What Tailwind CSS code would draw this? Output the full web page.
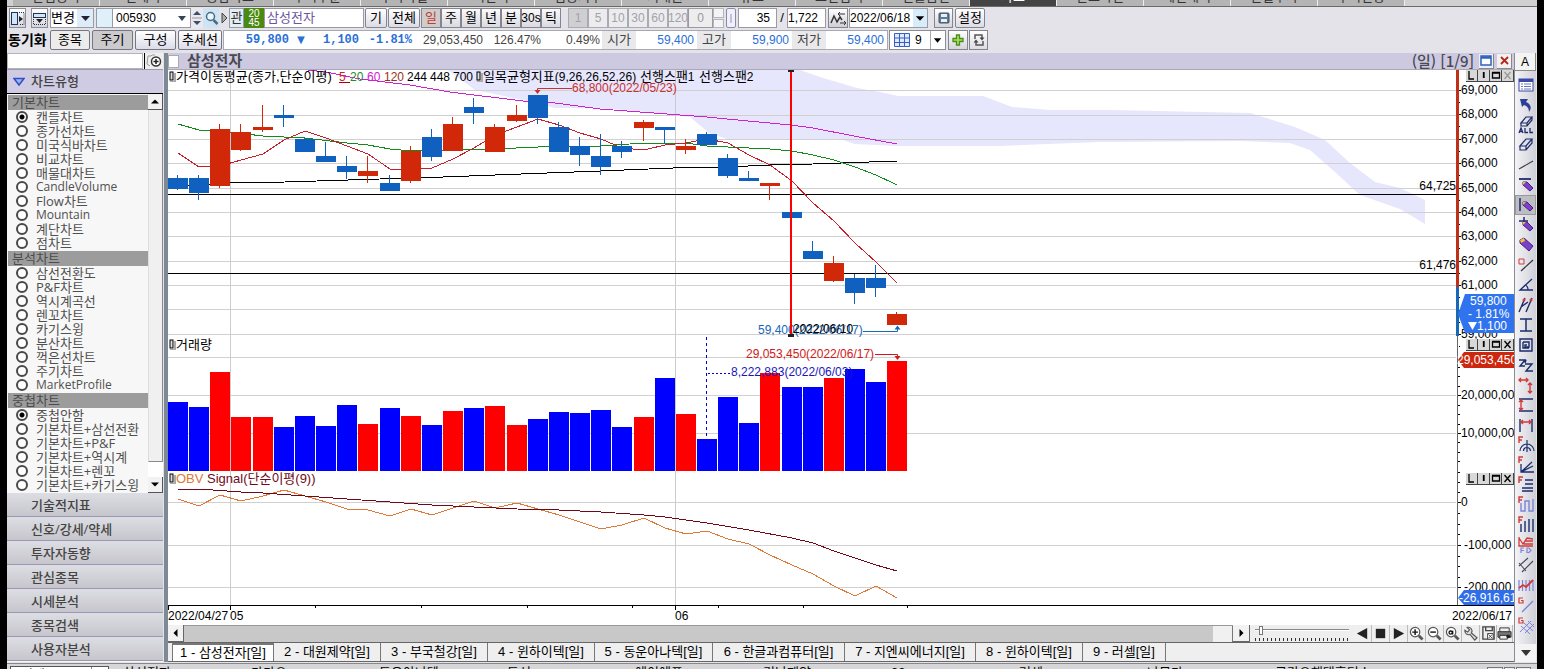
<!DOCTYPE html>
<html lang="ko">
<head>
<meta charset="utf-8">
<title>삼성전자 - 종합차트</title>
<script src="https://cdn.jsdelivr.net/npm/@tailwindcss/browser@4"></script>
</head>
<body class="min-h-screen overflow-x-hidden bg-black font-['Liberation_Sans','Noto_Sans_CJK_KR',sans-serif] text-[13px] leading-4 text-black">
<div class="mr-[7px] ml-[7px] flex h-screen min-h-[669px] flex-col overflow-hidden bg-[#e4e3e9]">

  <!-- screen tabs, scrolled mostly out of view -->
  <nav id="screens" aria-label="화면" class="flex h-[7px] shrink-0 items-end overflow-hidden border-b border-[#6b6a66] bg-[#d0d0d0] pl-[6px]"></nav>

  <!-- toolbar, first row -->
  <div class="mt-px flex h-5 shrink-0 items-stretch whitespace-nowrap pl-[2px]">
    <button aria-label="왼쪽 창" class="flex w-[17px] items-center justify-center border border-[#8c8c94] bg-gradient-to-b from-white to-[#d5d5de]"><svg width="15" height="15" viewBox="0 0 15 15"><rect x="1.500" y="1.500" width="6" height="12" fill="#cfe6fa" stroke="#235"/><path d="M9 1.500h5v12H9" fill="none" stroke="#235" stroke-dasharray="1 1"/><path d="M9 5l4 3-4 3z" fill="#222"/></svg></button>
    <button aria-label="아래 창" class="ml-[5px] flex w-[17px] items-center justify-center border border-[#8c8c94] bg-gradient-to-b from-white to-[#d5d5de]"><svg width="15" height="15" viewBox="0 0 15 15"><rect x="1.500" y="2.500" width="12" height="4" fill="#cfe6fa" stroke="#235"/><path d="M1.500 8v5.500h12V8" fill="none" stroke="#235" stroke-dasharray="1 1"/><path d="M4 8h7l-3.500 4z" fill="#222"/></svg></button>
    <div class="ml-[2px] flex w-[44px] items-center border border-[#9a9aa4] bg-white"><select aria-label="변경" class="w-[26px] appearance-none leading-4"><option>변경</option></select><svg class="h-full flex-1 bg-[#dcecf8]" viewBox="0 0 16 18"><path d="M4 7h9l-4.500 5z" fill="#223"/></svg></div>
    <button aria-label="종목 구분" class="ml-[2px] w-[17px] border border-[#9a9aa4] bg-[#dff0fb]"></button>
    <div class="flex w-[78px] items-center border border-l-0 border-[#9a9aa4] bg-white"><input aria-label="종목코드" value="005930" class="w-[62px] pl-[3px] text-[12px] leading-4"><svg class="h-full w-[14px]" viewBox="0 0 14 18"><path d="M3 7h8l-4 5z" fill="#345"/></svg></div>
    <button aria-label="이전 다음 종목" class="flex w-[12px] items-center justify-center bg-[#e8e8ee]"><svg width="10" height="16" viewBox="0 0 10 16"><path d="M1 5l4-4 4 4zM1 11l4 4 4-4z" fill="#3a5068"/><path d="M0 8h10" stroke="#999"/></svg></button>
    <button aria-label="종목 검색" class="flex w-[16px] items-center justify-center bg-[#cfe4f2]"><svg width="15" height="16" viewBox="0 0 15 16"><circle cx="6.500" cy="6.500" r="4" fill="#e8f6ff" stroke="#4a6a84" stroke-width="1.500"/><path d="M9.500 10l4 4" stroke="#4a6a84" stroke-width="2.500"/></svg></button>
    <button aria-label="펼치기" class="flex w-[10px] items-center justify-center"><svg width="7" height="12" viewBox="0 0 7 12"><path d="M1 1l5 5-5 5z" fill="#aaa" stroke="#444"/></svg></button>
    <button class="w-[15px] overflow-hidden border border-[#9a9aa4] bg-[#e2eef6] text-[#333]">관</button>
    <div class="flex w-[20px] flex-col items-center justify-center bg-[#4a8a12] text-[10px] leading-[9px] text-white"><span>20</span><span>45</span></div>
    <input aria-label="종목명" value="삼성전자" class="w-[100px] border border-[#9a9aa4] bg-white pl-[2px] text-[#6a55a0]">
    <button class="ml-px w-[22px] rounded-xs border border-[#85858f] bg-gradient-to-b from-white to-[#dcdce6]">기</button>
    <button class="ml-px w-[32px] rounded-xs border border-[#85858f] bg-gradient-to-b from-white to-[#dcdce6]">전체</button>
    <div id="periods" class="ml-px flex"></div>
    <div id="minutes" class="ml-[7px] flex"></div>
    <input aria-label="사용자 분" disabled value="0" class="w-[25px] border border-[#9a9aa4] bg-[#ededed] text-center text-[12px] text-[#999]">
    <div class="flex w-[11px] flex-col gap-px"><button aria-label="증가" class="flex-1 border border-[#b5b5bd] bg-[#f4f4f4]"></button><button aria-label="감소" class="flex-1 border border-[#b5b5bd] bg-[#f4f4f4]"></button></div>
    <button aria-label="구분" class="ml-[2px] w-[10px] rounded-xs border border-[#8a8aa8] bg-[#f0f0fa] text-[9px] text-[#77a]">|</button>
    <input aria-label="표시 개수" value="35" class="ml-[2px] w-[39px] border border-[#9a9aa4] bg-white pr-[6px] text-right text-[12px]">
    <span class="w-[10px] text-center leading-5">/</span>
    <input aria-label="전체 개수" value="1,722" class="w-[39px] border border-[#9a9aa4] bg-white text-left text-[12px]">
    <button aria-label="추세 전환" class="ml-[2px] flex w-[20px] items-center justify-center border border-[#85858f] bg-gradient-to-b from-white to-[#cfcfd6]"><svg width="17" height="15" viewBox="0 0 17 15"><path d="M1 12l3-7 3 6 3-5 2 3" fill="none" stroke="#333" stroke-width="1.500"/><path d="M8 3h7M10 1L8 3l2 2M10 12h6M14 10l2 2-2 2" stroke="#333" fill="none"/></svg></button>
    <div class="ml-px flex w-[79px] items-center border border-[#9a9aa4] bg-white"><input aria-label="기준일" value="2022/06/18" class="w-[63px] text-[12px] leading-4"><svg class="h-full flex-1 bg-[#d8edfb]" viewBox="0 0 15 18"><path d="M3 7h9l-4.500 5z"/></svg></div>
    <button aria-label="저장" class="ml-[6px] flex w-[19px] items-center justify-center border border-[#85858f] bg-gradient-to-b from-white to-[#d5d5dc]"><svg width="12" height="12" viewBox="0 0 12 12"><rect x="1" y="1" width="10" height="10" rx="1" fill="#5f7c94" stroke="#3c5366"/><path d="M3 2h6v3H3zM3 7h6v3H3z" fill="#e8f0f6"/></svg></button>
    <button class="ml-[2px] w-[30px] rounded-xs border border-[#85858f] bg-gradient-to-b from-white to-[#dcdce6]">설정</button>
  </div>

  <!-- toolbar, second row -->
  <div class="mt-[2px] flex h-5 shrink-0 items-stretch whitespace-nowrap pl-px">
    <span class="w-[42px] text-[14px] leading-5 font-bold">동기화</span>
    <button class="w-[40px] rounded-xs border border-[#77777f] bg-[#ececec]">종목</button>
    <button class="ml-[2px] w-[41px] rounded-xs border border-[#77777f] bg-[#cbcbcd]">주기</button>
    <button class="ml-[2px] w-[41px] rounded-xs border border-[#77777f] bg-gradient-to-b from-white to-[#dcdcea]">구성</button>
    <button class="ml-[2px] w-[44px] rounded-xs border border-[#77777f] bg-gradient-to-b from-white to-[#dcdcea]">추세선</button>
    <div class="ml-px flex w-[665px] border border-[#a8a8b0] bg-white text-[12px] leading-[18px] text-[#444]">
      <b class="w-[65px] text-right font-['Liberation_Mono',monospace] text-[#2a6fd6]">59,800</b>
      <span class="w-[24px] text-center text-[13px] text-[#2a6fd6]">▼</span>
      <b class="w-[46px] text-right font-['Liberation_Mono',monospace] text-[#2a6fd6]">1,100</b>
      <b class="w-[53px] text-right font-['Liberation_Mono',monospace] text-[#2a6fd6]">-1.81%</b>
      <span class="w-[71px] text-right">29,053,450</span>
      <span class="w-[58px] text-right">126.47%</span>
      <span class="w-[61px] pr-[2px] text-right">0.49%</span>
      <span class="w-[34px] bg-[#e9e9ec] text-center text-[13px]">시가</span><span class="w-[61px] pr-[3px] text-right text-[#2a6fd6]">59,400</span>
      <span class="w-[34px] bg-[#e9e9ec] text-center text-[13px]">고가</span><span class="w-[61px] pr-[3px] text-right text-[#2a6fd6]">59,900</span>
      <span class="w-[34px] bg-[#e9e9ec] text-center text-[13px]">저가</span><span class="w-[61px] pr-[3px] text-right text-[#2a6fd6]">59,400</span>
    </div>
    <div class="ml-px flex w-[57px] items-center border border-[#8c8c94] bg-white"><svg class="ml-[4px]" width="16" height="14" viewBox="0 0 16 14"><path d="M.500.500h15v13H.500zM.500 5h15M.500 9.500h15M5.500.500v13M10.500.500v13" fill="#dfeaff" stroke="#3b5fc0"/></svg><select aria-label="화면 수" class="ml-[5px] w-[15px] appearance-none text-[12px] leading-4"><option>9</option></select><svg class="h-full flex-1 border-l border-[#aaa]" viewBox="0 0 15 18"><path d="M3 7h8l-4 5z"/></svg></div>
    <button aria-label="추가" class="ml-[2px] flex w-[20px] items-center justify-center border border-[#85858f] bg-gradient-to-b from-white to-[#d5d5dc]"><svg width="12" height="12" viewBox="0 0 12 12"><path d="M4.500 1h3v3.500H11v3H7.500V11h-3V7.500H1v-3h3.500z" fill="#a8e060" stroke="#4c8c1c" stroke-width="1.300"/></svg></button>
    <button aria-label="새로고침" class="ml-px flex w-[19px] items-center justify-center border border-[#85858f] bg-gradient-to-b from-white to-[#dcdce2]"><svg width="14" height="14" viewBox="0 0 14 14"><path d="M3 6V2h7v3M11 8v4H4V9" fill="none" stroke="#555" stroke-width="1.500"/><path d="M7.500 4.500h5L10 7.500zM1.500 9.500h5L4 6.500z" fill="#444"/></svg></button>
  </div>

  <div class="mt-[3px] flex shrink-0 items-stretch">
    <!-- chart type panel -->
    <aside class="flex w-[156px] shrink-0 flex-col bg-[#f7f7f7]">
      <div class="flex h-[17px] border-b border-[#9c9ca8]"><input aria-label="차트 검색" class="min-w-0 flex-1 border border-[#b4b4bc] bg-white"><button aria-label="찾기" class="ml-px flex w-[19px] items-center justify-center border-l border-black bg-[#eee]"><svg width="16" height="14" viewBox="0 0 16 14"><path d="M2 2h3l1-1h3M2 2L1 10l3 2" fill="none" stroke="#999"/><circle cx="10" cy="7.500" r="4.500" fill="#fff" stroke="#333" stroke-width="1.500"/><path d="M7.500 7.500h5M10 5v5" stroke="#222" stroke-width="1.500"/></svg></button></div>
      <button class="flex h-[24px] items-center border-b border-black bg-[#cfcbe3] pl-[6px] text-left font-medium text-[#444]"><svg class="mr-[6px]" width="12" height="10" viewBox="0 0 12 10"><path d="M1 1.500h10L6 8z" fill="#9fb4f4" stroke="#2f4fc4" stroke-width="1.500"/></svg>차트유형</button>
      <div class="flex">
        <div id="types" class="flex-1 pb-px pl-px"></div>
        <div class="flex w-[15px] flex-col bg-[#eeeeee]">
          <button aria-label="위로" class="flex h-[16px] items-center justify-center border-r border-b border-[#555] bg-[#f2f2f2]"><svg width="8" height="5"><path d="M0 4.500l4-4 4 4z"/></svg></button>
          <div class="flex-1 border-r border-b border-l border-[#8a8a8a] border-l-[#ddd] bg-[#f0f0f0]"></div>
          <div class="h-[15px] bg-white"></div>
          <button aria-label="아래로" class="flex h-[16px] items-center justify-center border-r border-b border-[#555] bg-[#f2f2f2]"><svg width="8" height="5"><path d="M0 .500l4 4 4-4z"/></svg></button>
        </div>
      </div>
      <div id="sections" class="flex flex-1 flex-col"></div>
    </aside>
    <div class="w-[5px] shrink-0 border-l border-[#dfe4e8] bg-[#7d8a96]"></div>

    <!-- chart window -->
    <main class="flex min-w-0 flex-1 flex-col bg-[#efefef]">
      <header class="flex h-[17px] shrink-0 items-center border-b border-[#aaa8b4] bg-[#cdc9e1] text-[15px] font-bold text-[#4a4a52]">
        <input type="checkbox" aria-label="차트 선택" class="h-[13px] w-[11px] appearance-none border border-[#aaa] bg-white">
        <h1 class="ml-[8px]">삼성전자</h1>
        <span class="mr-[5px] ml-auto font-['Noto_Sans_CJK_KR',sans-serif] text-[15px] font-medium">(일) [1/9]</span>
        <button aria-label="최대화" class="mr-[3px] flex h-[15px] w-[15px] items-center justify-center border-r border-b border-[#888] bg-[#eef]"><svg width="12" height="11" viewBox="0 0 12 11"><rect x="1" y="1" width="10" height="9" fill="#fff" stroke="#2f62b8" stroke-width="1.500"/><path d="M1 2.500h10" stroke="#2f62b8" stroke-width="2.500"/></svg></button>
        <button aria-label="닫기" class="mr-[2px] flex h-[15px] w-[15px] items-center justify-center border-r border-b border-[#888] bg-[#f3f0f0]"><svg width="9" height="9" viewBox="0 0 9 9"><path d="M1 1l7 7M8 1L1 8" stroke="#b3261e" stroke-width="1.800"/></svg></button>
      </header>
      <div class="flex h-[555px] bg-white">
        <div class="relative min-w-0 flex-1">
          <svg id="plot" class="h-full w-full" role="img" aria-label="삼성전자 일봉 차트"></svg>
          <span class="absolute right-[-56px] bottom-0 text-[12px] leading-[18px] whitespace-nowrap">2022/06/17</span>
        </div>
        <div class="relative w-[58px] shrink-0">
          <svg id="axis" class="h-full w-full" role="img" aria-label="가격 축"></svg>
          <div class="panel absolute top-0 right-0 flex"></div>
          <div class="panel absolute top-[269px] right-0 flex"></div>
          <div class="panel absolute top-[403px] right-0 flex"></div>
        </div>
      </div>
      <!-- horizontal scroll and playback -->
      <div class="flex h-[18px] shrink-0 items-stretch border-b border-[#666] bg-[#eee]">
        <button aria-label="왼쪽으로" class="flex w-[16px] items-center justify-center border-r border-b border-[#666] bg-[#f2f2f2]"><svg width="5" height="8"><path d="M4.500 0v8l-4-4z"/></svg></button>
        <div class="flex flex-1 justify-end border-t border-[#999] bg-[#c8c8c8]"><div class="w-[20px] border-r border-[#777] bg-[#f0f0f0]"></div></div>
        <button aria-label="오른쪽으로" class="flex w-[17px] items-center justify-center border-r border-b border-[#666] bg-[#f2f2f2]"><svg width="5" height="8"><path d="M.500 0v8l4-4z"/></svg></button>
        <label class="ml-[5px] flex w-[94px] flex-col"><input type="range" value="4" aria-label="재생 속도" class="mt-[4px] h-[2px] w-full appearance-none border-t border-[#888] bg-white [&::-webkit-slider-thumb]:h-[9px] [&::-webkit-slider-thumb]:w-[4px] [&::-webkit-slider-thumb]:appearance-none [&::-webkit-slider-thumb]:border [&::-webkit-slider-thumb]:border-[#777] [&::-webkit-slider-thumb]:bg-white"><span class="mt-[7px] h-[3px] w-full bg-[repeating-linear-gradient(90deg,#333_0_1px,transparent_1px_4px)]"></span></label>
        <div id="play" class="mr-px ml-[4px] flex"></div>
      </div>
      <nav id="charts" aria-label="차트 탭" class="flex h-[19px] shrink-0 border-b border-[#666] pl-[4px]"></nav>
    </main>

    <!-- drawing tools -->
    <div class="mr-[1px] flex w-[22px] shrink-0 flex-col border-l border-[#8c8c94] bg-gradient-to-r from-[#f4f4f6] to-[#cfcfd8]">
      <button class="h-[18px] border-r border-b border-[#888] bg-[#f4f4f4] text-[12px]">A</button>
      <div id="tools" class="mt-[4px] flex flex-col"></div>
      <button aria-label="도구 더보기" class="mt-auto flex h-[18px] items-center justify-center bg-[#f4f4f4]"><svg width="10" height="6"><path d="M0 0h10L5 6z" fill="#333"/></svg></button>
    </div>
  </div>

  <!-- quick stock strip -->
  <footer class="mt-px flex h-[8px] min-h-0 flex-1 items-start overflow-hidden border-t border-[#888] bg-[#d6d6d8] pl-[3px]">
    <div class="mt-[2px] flex w-[99px] border border-[#555] bg-white leading-4"><span class="flex-1 pl-[10px]">전체종목</span><span class="w-[17px] border-l border-[#888]"></span></div>
    <div id="stocks" class="flex min-w-0 flex-1"></div>
    <div class="mt-[3px] mr-[6px] flex gap-px"><i class="h-4 w-[16px] border border-[#777] bg-[#eee]"></i><i class="h-4 w-[11px] border border-[#777] bg-[#eee]"></i><i class="h-4 w-[15px] border border-[#777] bg-[#eee]"></i></div>
  </footer>
</div>

<script>
const $ = id => document.getElementById(id);

$('screens').innerHTML = ['관심종목','현재가','종합차트','주식주문','투자자별','시간외','업종지수','거래원','뉴스','조건검색','선물옵션','차트','잔고확인','체결내역','일별주가','수익현황']
  .map((t, i) => `<a href="#" class="flex h-4 w-[87px] shrink-0 items-end justify-center border-r border-[#eee] pb-[3px] text-[13px] ${i == 11 ? 'bg-[#444] text-white' : 'bg-[#b4b4b4] text-[#333]'}"><span class="leading-[13px]">${t}</span></a>`).join('');

$('periods').innerHTML = ['일','주','월','년','분','30s','틱']
  .map((t, i) => `<button class="w-[20px] border border-[#85858f] ${i == 5 ? 'text-[12px]' : 'text-[13px]'} ${i ? 'bg-gradient-to-b from-[#fafafa] to-[#dadae2]' : 'bg-[#d0cccc] text-[#c03a34]'}"><span class="-mx-1">${t}</span></button>`).join('');
$('minutes').innerHTML = ['1','5','10','30','60','120']
  .map((t, i) => `<button disabled class="w-[20px] border border-[#aaaab2] text-[12px] text-[#a2a2a8] ${i ? 'bg-[#ececee]' : 'bg-[#cfcfd2]'}"><span class="-mx-1">${t}</span></button>`).join('');

const groups = [
  ['기본차트', ['캔들차트','종가선차트','미국식바차트','비교차트','매물대차트','CandleVolume','Flow차트','Mountain','계단차트','점차트'], 0],
  ['분석차트', ['삼선전환도','P&amp;F차트','역시계곡선','렌꼬차트','카기스윙','분산차트','꺽은선차트','주기차트','MarketProfile'], -1],
  ['중첩차트', ['중첩안함','기본차트+삼선전환','기본차트+P&amp;F','기본차트+역시계','기본차트+렌꼬','기본차트+카기스윙'], 0]];
$('types').innerHTML = groups.map(([h, rows, sel], g) =>
  `<h2 class="mt-px h-[15px] bg-[#9c9c9c] pl-[4px] text-[13px] leading-[15px] text-[#4c4c4c]">${h}</h2>` +
  rows.map((r, i) => `<label class="flex h-[14px] items-center overflow-hidden pl-[8px] font-['Open_Sans','Noto_Sans_CJK_KR',sans-serif] whitespace-nowrap text-[#505050] ${/[a-z]{5}/.test(r) && !r.includes('&') ? 'text-[12px]' : 'text-[13px]'} leading-[14px]"><input type="radio" name="type${g == 2 ? 2 : 1}" ${i == sel ? 'checked' : ''} class="mr-[8px] h-[12px] w-[12px] shrink-0 appearance-none rounded-full border-2 border-[#484848] bg-white checked:bg-[radial-gradient(circle,#000_0_2px,#fff_3px)]">${r}</label>`).join('')).join('');
$('sections').innerHTML = ['기술적지표','신호/강세/약세','투자자동향','관심종목','시세분석','종목검색','사용자분석']
  .map(t => `<button class="h-[24px] border-b border-[#9a98b4] bg-gradient-to-b from-[#dddde4] to-[#c6c6cc] pl-[24px] text-left font-['Open_Sans','Noto_Sans_CJK_KR',sans-serif] font-medium text-[#444]">${t}</button>`).join('');

document.querySelectorAll('.panel').forEach((p, n) => {
  p.innerHTML = [['하단','M3 1v8h5'],['중앙','M5.500 2v6M6 2v6'],['확대','M2.500 3h7v5h-7zM2 2.500h8'],['닫기','M2.500 2l6 7M8.500 2l-6 7']]
    .map(([l, d], i) => `<button aria-label="${l}" class="h-[12px] w-[12px] border-r border-b border-[#444] bg-[#d8d8d8]"><svg width="11" height="11" viewBox="0 0 11 11"><path d="${d}" fill="none" stroke="${n == 0 && i == 3 ? '#999' : '#000'}" stroke-width="1.300"/></svg></button>`).join('');
});

const mag = s => `<circle cx="6.500" cy="6.500" r="5" fill="#fff" stroke="#555" stroke-width="1.300"/><path d="M10.500 10.500l4 4" stroke="#555" stroke-width="3"/>${s}`;
$('play').innerHTML = [
  ['뒤로', 19, '<path d="M13 2v12L2 8z" fill="#222"/>'], ['정지', 18, '<path d="M3 3h10v10H3z" fill="#222"/>'], ['재생', 18, '<path d="M3 2v12l11-6z" fill="#222"/>'],
  ['확대', 18, mag('<path d="M3.500 6.500h6M6.500 3.500v6" stroke="#111" stroke-width="1.500"/>')], ['축소', 18, mag('<path d="M3.500 6.500h6" stroke="#111" stroke-width="1.500"/>')],
  ['자동', 18, mag('<circle cx="6" cy="7" r="1.700" fill="none" stroke="#111" stroke-width="1.400"/><path d="M8.200 5v4" stroke="#111" stroke-width="1.400"/>')],
  ['설정', 18, '<path d="M2 4.500a4 4 0 0 0 5.500 4.500l5 6 2.500-2.500-6-5A4 4 0 0 0 4.500 1.500L7 4 5 6.500z" fill="#ddd" stroke="#555" stroke-width="1.200"/>'],
  ['저장', 17, '<path d="M2 1h12v13H2zM5 1v4h7V1" fill="none" stroke="#444" stroke-width="1.400"/><path d="M7 8h6v6H7zM8 9l4 4M12 9l-4 4" stroke="#444" fill="#fff"/>'],
  ['인쇄', 16, '<path d="M1 6h14v6H1z" fill="#777" stroke="#333"/><path d="M3 2h10v4H3zM3 10h8v4H3z" fill="#eee" stroke="#333"/><circle cx="12" cy="11" r="2" fill="#222"/>']]
  .map(([l, w, s]) => `<button aria-label="${l}" class="flex items-center justify-center border-r border-[#bbb] bg-[#efefef]" style="width:${w}px"><svg width="15" height="15" viewBox="0 0 16 16">${s}</svg></button>`).join('');

$('charts').innerHTML = [['삼성전자',102],['대원제약',107],['부국철강',107],['윈하이텍',107],['동운아나텍',118],['한글과컴퓨터',132],['지엔씨에너지',131],['윈하이텍',107],['러셀',83]]
  .map(([t, w], i) => `<a href="#" class="flex items-center justify-center border-r border-[#777] text-[13px] whitespace-nowrap ${i ? '' : 'border-t-2 border-l bg-white'}" style="width:${w}px">${i + 1} - ${t}[일]</a>`).join('');
$('stocks').innerHTML = ['삼성전자','카카오','동운아나텍','동성','에이에프','경남제약','33','러셀','나무가','금강오해택홀딩스']
  .map(t => `<span class="w-[128px] shrink-0 pl-[14px] leading-[18px] whitespace-nowrap">${t}</span>`).join('');

// Drawing tools: 20x20 glyphs
const N = '#1c2d6c', R = '#d23a3a', L = '#7c84d8';
const ln = (d, c = N, w = 1.4) => `<path d="${d}" fill="none" stroke="${c}" stroke-width="${w}"/>`;
const pen = '<path d="M7 7l4 0 6 6-3 3-7-6z" fill="#7b3fc8" stroke="#452080"/><path d="M7 7l3 0-3 3z" fill="#f0c040"/>';
const F = (c = R) => ln('M3 8V2h4M3 5h3', c);
const G = ln('M7 3H3v5h4V5.500H5', R, 1.2);
const tools = [
  '<rect x="3" y="4" width="14" height="12" fill="#fff" stroke="#3a48a8"/><path d="M3 5.500h14" stroke="#3a48a8" stroke-width="3"/>' + ln('M5 9h2M8 9h7M5 11.500h2M8 11.500h7M5 14h2M8 14h7', '#6a78c8', 1),
  '<path d="M4 4h8l-2 3c5 2 6 6 3 10 0-4-2-6-5-7l-2 2z" fill="#2c3f96"/>',
  ln('M5 8l5-6h6l-5 6zM5 8v3h6l5-6V2M11 8v3', N, 1.2) + ln('M3 18l2-5 2 5M4 16.500h2M9 13v4.500h3M14 13v4.500h3', N, 1.3),
  ln('M4 11l6-7h6l-6 7zM4 11v4h6l6-7V4M10 11v4', N, 1.2),
  ln('M3 14L17 6', '#444', 1.2), ln('M3 4h12', N, 1.8) + pen, ln('M4 3v13', N, 1.5) + pen, ln('M8 2v9M3 6h9', N, 1.5) + pen,
  '<path d="M4 5l4-2 9 8-4 5-9-8z" fill="#7b3fc8" stroke="#452080"/><path d="M4 5l4-2 1 3-4 2z" fill="#f0c040"/>',
  ln('M3 4h5v5H3z', R, 1) + ln('M5 16L17 5', '#334', 1.2), ln('M16 4L4 15h13M9 10c3 1 3 3 3 5', N, 1.3),
  ln('M3 17L9 3M10 17l6-14M5 12l7-5', N, 1.4) + '<circle cx="8" cy="5" r="1.500" fill="#d23a3a"/><circle cx="15" cy="5" r="1.500" fill="#d23a3a"/>',
  ln('M4 4h12M4 16h12M10 4v12', N, 1.5), ln('M4 4h12v12H4zM7 7h6v5H9V10h2M7 7v6h6', N, 1.4),
  ln('M3 5h6l-5 6h5M10 5l-1 3M9 9h7l-6 7h7', N, 1.4),
  ln('M3 5h9M5 3L3 5l2 2M10 3l2 2-2 2M14 8v10M12 10l2-2 2 2M12 16l2 2 2-2', R, 1.4),
  ln('M3 4h14M3 16h14', N, 1.4) + ln('M5 5v10M3 7l2-2 2 2M3 13l2 2 2-2', R, 1.4),
  ln('M4 4v13M16 4v13', N, 1.4) + ln('M5 7h10M7 5L5 7l2 2M13 5l2 2-2 2', R, 1.4),
  F() + ln('M4 16a7 7 0 0 1 14 0M7.500 16a3.500 3.500 0 0 1 7 0M11 5v12', N, 1.2),
  F() + ln('M5 9v8h13M5 17l11-10M5 17l12-6', N, 1.3), F() + ln('M9 5h8M9 9h8M6 13h11M6 16h11', N, 1.3),
  F() + ln('M5 8v8h4V6h4v10h4V4', L, 1.4), F() + ln('M5 9v8M9 6v11M13 4v13M17 4v13', N, 1.4),
  ln('M3 2v9h14M3 3l4 6 4-6 6 1M9 6h8M8 9h9', R, 1.3) + ln('M5 18v-5h3M5 15.500h3M11 13v4.500h2l2-2-2-2.500z', L, 1.2),
  ln('M3 11L12 3M6 17L17 6M3 8l7 8', '#445', 1.1), ln('M3 5v11M6.500 5v11M10 5v11M13.500 5v11M17 5v11', L, 1.2) + ln('M3 13l4-3 3 2 7-7', R, 1.8),
  G + ln('M6 17L17 6', L, 1.3), G + ln('M5 11l9 8M8 8l9 8M12 6l6 6M4 17L15 6M9 18l9-9', L, 1)];
$('tools').innerHTML = tools.map((s, i) => `<button aria-label="그리기 도구 ${i + 1}" class="flex h-[20px] items-center justify-center ${i == 6 ? 'border border-[#999] bg-[#bdbdc4]' : ''}"><svg class="shrink-0" width="20" height="20" viewBox="0 0 20 20">${s}</svg></button>`).join('');

// Plot: window coordinates, origin moved to the plot's corner
const X = i => Math.round(178 + i * 21.16);
const H = (y, c = '#d0d0d0') => `<path d="M168 ${y + .5}H4000" stroke="${c}"/>`;
const T = (x, y, t, c = '#000', a = 'start') => `<text x="${x}" y="${y}" fill="${c}" text-anchor="${a}">${t}</text>`;
const line = (pts, c) => `<polyline points="${pts.map(p => p.join()).join(' ')}" fill="none" stroke="${c}" shape-rendering="crispEdges"/>`;
const byIdx = a => a.map(([i, y]) => [X(i), y]);
// [up, high, bodyTop, bodyBottom, low]
const candles = [[0,175,178,189,190],[0,175,178,193,200],[1,124,129,186,188],[1,124,132,150,151],[1,105,127,130,132],[0,105,115,118,127],[0,137,139,152,152],[0,142,156,162,162],[0,156,166,172,179],[1,156,171,176,183],[0,175,183,191,191],[1,146,151,181,183],[0,129,137,157,161],[1,117,124,151,151],[0,98,107,113,124],[1,124,127,152,152],[1,105,115,121,122],[0,95,95,118,124],[0,122,127,152,152],[0,137,146,155,166],[0,134,156,167,175],[0,141,146,152,158],[1,120,122,128,141],[0,127,127,130,144],[1,139,146,150,154],[0,132,134,145,145],[0,154,158,176,178],[0,171,178,181,181],[1,183,183,186,200],[0,212,212,218,218],[0,241,251,259,259],[1,256,263,281,282],[0,274,278,293,304],[0,265,278,288,297],[1,312,314,325,325]];
const vol = [402,407,372,417,417,427,416,426,405,424,408,416,425,411,408,406,425,419,412,413,410,427,417,378,414,439,397,423,373,387,387,378,369,382,361];
const volUp = [2,3,4,9,11,13,15,16,22,24,28,31,34];
const obv = [499,506,495,501,496,490,496,502,509,510,516,509,515,508,501,508,503,509,515,522,529,525,518,528,534,531,539,544,555,565,574,586,596,586,598];
const ma5 = [153,167,166,160,154,140,131,138,146,154,169,170,168,159,148,135,127,119,125,133,139,148,150,145,143,139,143,155,165,181,203,221,243,262,283];
const marker = (x, y) => `<rect x="${x}" y="${y}" width="3" height="8" fill="#ddd" stroke="#000"/><path d="M${x + 4} ${y + 1}h2v9h-6v-1h4z" fill="#aaa"/>`;
$('plot').innerHTML = `<g transform="translate(-168,-70)" font-size="13">
  <path d="M448 70H800L823 78 857 88 880 92 898 96H983L1012 107 1050 110 1110 110 1250 113 1295 127 1325 140 1350 163 1375 182 1400 188 1425 200V224L1400 209 1360 195 1335 172 1310 150 1290 143 1240 141 1100 142 1000 146H897L855 144 840 139H727L709 133 690 117 645 112 600 108H555L523 100 475 90Z" fill="#e6e6fd"/>
  ${[90,115,139,163,188,212,236,261,285,309,334,357,395,433,502,545,587].map(y => H(y)).join('')}
  <path d="M230.500 70V605M675.500 70V605" stroke="#ccc"/>
  ${H(194, '#000')}${H(273, '#000')}
  ${line([[178,186],[230,183],[285,182],[443,177],[600,171],[673,168],[727,167],[770,165],[813,164],[897,161]], '#000')}
  ${line(byIdx([[0,124],[1,130],[2,131],[4,136],[6,138],[8,143],[9,145],[10,149],[11,151],[13,150],[15,149],[17,147],[20,146],[22,143],[24,143],[25,146],[26,147],[28,149],[29,151],[30,155],[31,160],[32,167],[33,175],[34,185]]), '#128a1c')}
  ${line([[308,70],[326,72],[360,79],[410,85],[450,92],[523,101],[555,103],[600,109],[707,117],[727,119],[791,125],[813,128],[854,136],[897,144]], '#d020d0')}
  ${line(ma5.map((y, i) => [X(i), y]), '#c81e2c')}
  ${candles.map(([u, h, t, b, l], i) => { const c = u ? '#d02808' : '#1060c0', x = X(i); return `<rect x="${x - 1}" y="${h}" width="1" height="${l - h}" fill="${c}"/><rect x="${x - 10}" y="${t}" width="20" height="${b - t}" fill="${c}"/>`; }).join('')}
  ${vol.map((y, i) => `<rect x="${X(i) - 10}" y="${y}" width="20" height="${471 - y}" fill="${volUp.includes(i) ? '#f00' : '#00f'}"/>`).join('')}
  ${line(obv.map((y, i) => [X(i), y]), '#e07838')}
  ${line(byIdx([[0,489],[1,489],[3,492],[4,493],[6,496],[8,499],[10,502],[12,505],[14,507],[16,509],[18,510],[20,512],[22,515],[23,517],[25,523],[27,530],[29,538],[30,543],[31,551],[32,558],[33,565],[34,571]]), '#700818')}
  <path d="M706.500 337V438" stroke="#00c" stroke-dasharray="3 3"/><path d="M708 373.500H730" stroke="#00c" stroke-dasharray="2 2"/>
  ${marker(170, 72)}${marker(477, 72)}${marker(170, 340)}${marker(170, 474)}
  ${T(176, 81, '가격이동평균(종가,단순이평)')}
  <g font-size="12">${T(339, 81, '5', '#d02020')}<path d="M339 82.500h11" stroke="#a00"/>${T(350, 81, '20', '#189028')}${T(367, 81, '60', '#d020d0')}${T(384, 81, '120', '#a03018')}${T(407, 81, '244')}${T(430, 81, '448')}${T(453, 81, '700')}</g>
  ${T(483, 81, '일목균형지표<tspan font-size="12">(9,26,26,52,26)</tspan>')}${T(640, 81, '선행스팬<tspan font-size="12">1</tspan>')}${T(699, 81, '선행스팬<tspan font-size="12">2</tspan>')}
  ${T(176, 349, '거래량')}${T(176, 483, 'OBV', '#e07838')}${T(207, 483, 'Signal(단순이평(9))', '#700818')}
  <g font-size="12">${T(572, 92, '68,800(2022/05/23)', '#c83030')}${T(758, 334, '59,400(2022/06/17)', '#1868b8')}${T(746, 358, '29,053,450(2022/06/17)', '#d01818')}${T(731, 376, '8,222,883(2022/06/03)', '#1818b8')}${T(793, 333, '2022/06/10')}</g>
  <path d="M572 88.500H537.500V91" fill="none" stroke="#c83030"/><path d="M534.500 90h6l-3 4z" fill="#c83030"/>
  <path d="M863 331.500H897.500V328" fill="none" stroke="#1868b8"/><path d="M894.500 329.500h6l-3-4z" fill="#1868b8"/>
  <path d="M875 354.500H897.500V357" fill="none" stroke="#d01818"/><path d="M894.500 356h6l-3 4z" fill="#d01818"/>
  <path d="M791 70V336" stroke="#f00" stroke-width="2"/><path d="M788 70h6v2h-6zM788 334h6v3h-6z" fill="#222"/>
  <path d="M168 605.500H4000M168.500 605v5M230.500 605v5M315.500 605v3M421.500 605v3M527.500 605v3M632.500 605v3M675.500 605v5M718.500 605v3M803.500 605v3M907.500 605v3" stroke="#000"/>
  <g font-size="12">${T(168, 620, '2022/04/27')}${T(230, 620, '05')}${T(675, 620, '06')}</g>
  </g>
  <svg x="100%" width="1" height="555" overflow="visible"><g font-size="12">${T(0, 120, '64,725', '#000', 'end')}${T(0, 199, '61,476', '#000', 'end')}</g></svg>`;

const price = [69,68,67,66,65,64,63,62,61,60,59];
$('axis').innerHTML = `<g transform="translate(-1456,-70)" font-size="12">
  <path d="M1457.500 336V606" stroke="#666"/><path d="M1456 605.500h60" stroke="#000"/>
  <rect x="1456" y="70" width="3" height="217" fill="#c03018"/><rect x="1456" y="287" width="3" height="49" fill="#1868b8"/>
  ${price.map((p, i) => { const y = Math.round(90 + i * 24.4); return `<path d="M1459 ${y + .5}h2M1459 ${y + 12.5}h1" stroke="#000"/>` + (p == 60 ? '' : T(1461, y + 4, p + ',000')); }).join('')}
  ${[395,433].map((y, i) => `<path d="M1458 ${y + .5}h3" stroke="#000"/>` + T(1461, y + 4, (2 - i) + '0,000,000')).join('')}
  ${[367,376,386,405,414,424,442,452,461,472,482,492,513,524,534,556,566,577].map(y => `<path d="M1458 ${y + .5}h2" stroke="#000"/>`).join('')}
  ${[[502,'0'],[545,'-100,000'],[587,'-200,000']].map(([y, t], i) => `<path d="M1458 ${y + .5}h3" stroke="#000"/>` + T(i ? 1464 : 1461, y + 4, t)).join('')}
  <path d="M1458 314l7-20h50v39h-50z" fill="#2f74ee"/>
  ${T(1470, 305, '59,800', '#fff')}${T(1468, 318, '- 1.81%', '#fff')}${T(1477, 330, '1,100', '#fff')}<path d="M1468 322h9l-4.500 8z" fill="#fff"/>
  <path d="M1458 360l6-8h51v16h-51z" fill="#cc2810"/>${T(1457, 364, '29,053,450', '#fff')}
  <path d="M1458 598l6-8h51v15h-51z" fill="#2f6ee8"/>${T(1459, 602, '-26,916,61', '#fff')}
  </g>`;
</script>
</body>
</html>
